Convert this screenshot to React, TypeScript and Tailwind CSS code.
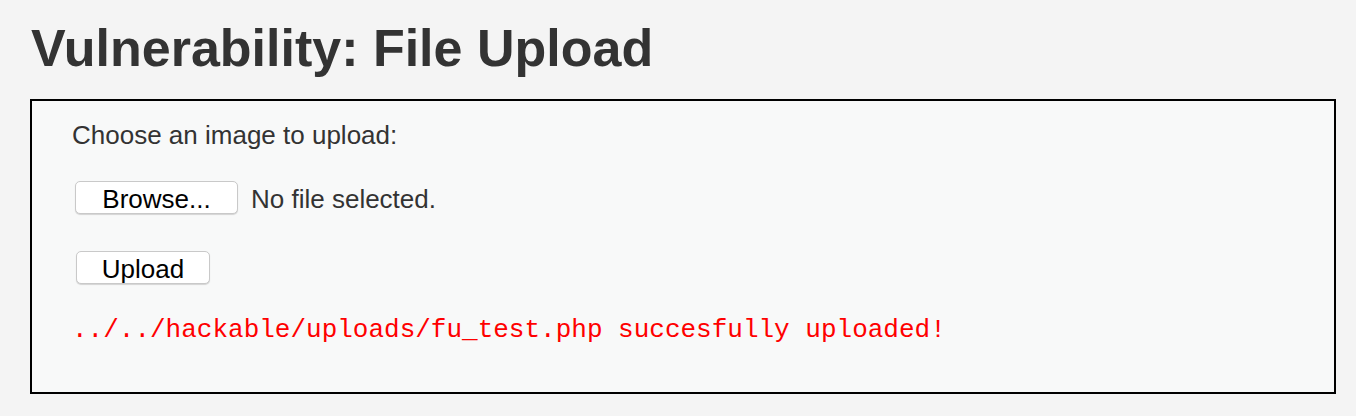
import React from "react";

export default function App() {
  return (
    <div className="w-[1356px] h-[416px] bg-[#f4f4f4] overflow-hidden" style={{ fontFamily: '"Liberation Sans", Arial, sans-serif' }}>
      <h1 className="ml-[31px] pt-[22px] text-[52px] leading-[52px] font-bold text-[#333333]">
        Vulnerability: File Upload
      </h1>
      <div className="mt-[25px] ml-[30px] w-[1306px] h-[295px] border-2 border-black bg-[#f8f9f9] pl-[40px] flex flex-col">
        <p className="mt-[19px] text-[26px] leading-[30px] text-[#333333]">Choose an image to upload:</p>
        <div className="mt-[31px] flex items-start">
          <button className="ml-[3px] w-[163px] h-[33px] bg-white border border-[#c9c9c9] rounded-[5px] shadow-[0_1px_1px_rgba(0,0,0,0.15)] text-[26px] leading-[30px] pt-[2px] text-black text-center">
            Browse...
          </button>
          <span className="ml-[13px] mt-[3px] text-[26px] leading-[30px] text-[#333333]">No file selected.</span>
        </div>
        <div className="mt-[37px] flex">
          <button className="ml-[4px] w-[134px] h-[33px] bg-white border border-[#c9c9c9] rounded-[5px] shadow-[0_1px_1px_rgba(0,0,0,0.15)] text-[26px] leading-[30px] pt-[2px] text-black text-center">
            Upload
          </button>
        </div>
        <pre className="mt-[31px] text-[26px] leading-[30px] text-[#ff0000]" style={{ fontFamily: '"Liberation Mono", "Courier New", monospace' }}>
          ../../hackable/uploads/fu_test.php succesfully uploaded!
        </pre>
      </div>
    </div>
  );
}
